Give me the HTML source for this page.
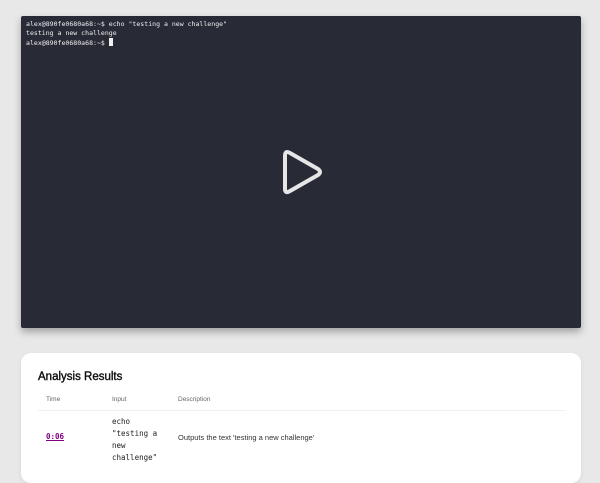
<!DOCTYPE html>
<html><head><meta charset="utf-8"><style>
html,body{margin:0;padding:0;width:600px;height:463px;overflow:hidden;background:#e8e8e8;font-family:"Liberation Sans",sans-serif;}
.term{position:absolute;left:21px;top:16px;width:560px;height:312px;background:#282a36;border-radius:2px;box-shadow:0 4px 8px rgba(0,0,0,0.3);}
.term pre{margin:0;position:absolute;left:5px;top:4px;font-family:"DejaVu Sans Mono","Liberation Mono",monospace;font-size:6.55px;line-height:9px;color:#f0f0f0;}
.cur{display:inline-block;width:4px;height:8px;background:#f0f0f0;vertical-align:-1px;}
.card{position:absolute;left:21px;top:353px;width:560px;height:130px;background:#fff;border-radius:10px;box-shadow:0 2px 6px rgba(0,0,0,0.06);}
h2{position:absolute;left:17px;top:18px;margin:0;font-size:11.5px;font-weight:normal;color:#111;-webkit-text-stroke:0.4px #111;}
.th{position:absolute;top:43px;font-size:6.5px;color:#666;}
.line{position:absolute;left:17px;right:15px;top:57px;height:1px;background:#f0f0f0;}
.mono{font-family:"DejaVu Sans Mono","Liberation Mono",monospace;}
.t{position:absolute;left:25px;top:79px;font-size:7.5px;color:#800080;font-weight:bold;text-decoration:underline;}
.in{position:absolute;left:91px;top:63px;font-size:7.5px;line-height:12px;color:#222;}
.d{position:absolute;left:157px;top:80px;font-size:7.5px;color:#333;}
</style></head><body>
<div class="term"><pre>alex@890fe0680a68:~$ echo "testing a new challenge"
testing a new challenge
alex@890fe0680a68:~$ <span class="cur"></span></pre>
<svg style="position:absolute;left:0;top:0" width="560" height="312"><path d="M264 140 L264 173 Q264 178 269 175 L297 159 Q301 156 297 153 L269 137 Q264 134 264 140 Z" fill="none" stroke="#e6e6e6" stroke-width="4" stroke-linejoin="round"/></svg>
</div>
<div class="card">
<h2>Analysis Results</h2>
<div class="th" style="left:25px">Time</div>
<div class="th" style="left:91px">Input</div>
<div class="th" style="left:157px">Description</div>
<div class="line"></div>
<div class="t mono">0:06</div>
<div class="in mono">echo<br>"testing a<br>new<br>challenge"</div>
<div class="d">Outputs the text 'testing a new challenge'</div>
</div>
</body></html>
